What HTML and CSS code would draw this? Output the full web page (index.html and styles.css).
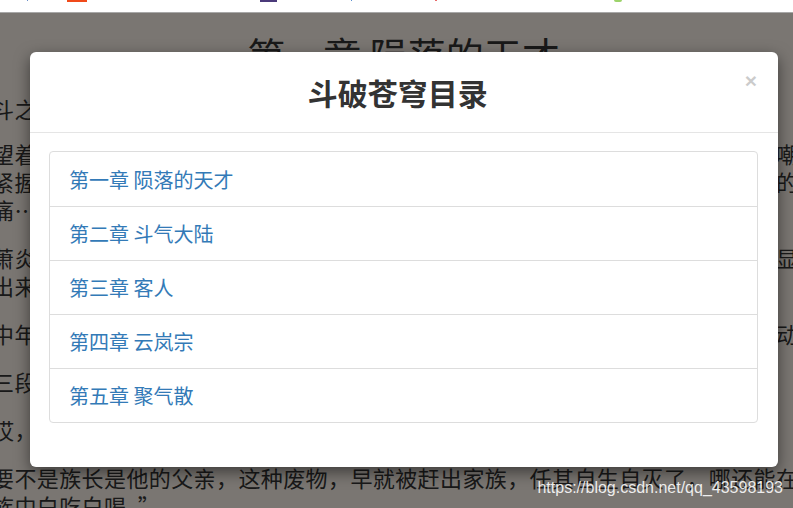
FILE: index.html
```html
<!DOCTYPE html>
<html lang="zh-CN">
<head>
    <meta charset="UTF-8">
    <meta name="viewport" content="width=device-width, initial-scale=1.0">
    <title>斗破苍穹</title>
    <link rel="stylesheet" href="styles.css">
</head>
<body>
    <div class="topbar">
        <span class="tb tb-blue"></span>
        <span class="tb tb-orange"></span>
        <span class="tb tb-purple"></span>
        <span class="tb tb-blue2"></span>
        <span class="tb tb-red"></span>
        <span class="tb tb-green"></span>
    </div>

    <div class="viewport">
        <article class="chapter">
            <h1>第一章 陨落的天才</h1>
            <p>斗之力，三段！</p>
            <p>望着测验魔石碑上闪亮得有些刺眼的五个大字，少年面无表情，唇角有着一抹自嘲，紧握的手掌，因为大力，导致略微尖锐的指甲深深刺进了掌心，带来一阵阵钻心的疼痛……</p>
            <p>萧炎，斗之力，三段！测验魔石碑之旁，一位中年男子，淡淡地看了一眼碑上所显示出来的信息，语气漠然的将之公布了出来……</p>
            <p>中年男子话刚刚脱口，便是不出意外的在人头汹涌的广场上带起了一阵嘲讽的骚动。</p>
            <p>三段？嘿嘿，果然不出我所料，这个“天才”这一年又是在原地踏步！</p>
            <p>哎，这废物真是把家族的脸都给丢光了。</p>
            <p>要不是族长是他的父亲，这种废物，早就被赶出家族，任其自生自灭了，哪还能在家族中白吃白喝。”</p>
        </article>

        <div class="backdrop">
            <div class="modal">
                <div class="modal-header">
                    <h4 class="modal-title">斗破苍穹目录</h4>
                    <button class="close" type="button">&times;</button>
                </div>
                <div class="modal-body">
                    <div class="list-group">
                        <a class="list-group-item" href="#">第一章 陨落的天才</a>
                        <a class="list-group-item" href="#">第二章 斗气大陆</a>
                        <a class="list-group-item" href="#">第三章 客人</a>
                        <a class="list-group-item" href="#">第四章 云岚宗</a>
                        <a class="list-group-item" href="#">第五章 聚气散</a>
                    </div>
                </div>
            </div>
            <span class="watermark">https://blog.csdn.net/qq_43598193</span>
        </div>
    </div>
</body>
</html>
```

FILE: styles.css
```css
body {
    margin: 0;
    padding: 0;
    overflow: hidden;
    font-family: "Noto Sans CJK SC", "Noto Sans", sans-serif;
    background: #f4ece4;
    color: #333;
}
.topbar {
    height: 12px;
    background: #fff;
    border-bottom: 1px solid #a8a8a8;
    display: flex;
    align-items: flex-start;
}
.tb {
    display: block;
    height: 1px;
}
.tb-blue { width: 1px; margin-left: 27px; background: #6b8fc9; }
.tb-orange { width: 20px; margin-left: 39px; height: 2px; background: #f04a1a; }
.tb-purple { width: 17px; margin-left: 173px; height: 2px; background: #4b3a7a; }
.tb-blue2 { width: 1px; margin-left: 74px; background: #5a8fd0; }
.tb-red { width: 2px; margin-left: 83px; background: #e86a6a; }
.tb-green { width: 8px; margin-left: 177px; height: 2px; border-radius: 0 0 4px 4px; background: #9cd36a; }

.viewport {
    position: relative;
    height: 495px;
    overflow: hidden;
}
.chapter {
    width: 832px;
    margin-left: -8px;
    padding-top: 20px;
}
.chapter h1 {
    margin: 0 0 19px;
    font-size: 38px;
    font-weight: normal;
    line-height: 42px;
    text-align: center;
    padding-right: 9px;
}
.chapter p {
    margin: 0 0 20px;
    font-size: 22px;
    letter-spacing: 0.4px;
    line-height: 28px;
}
.chapter p:first-of-type {
    margin-bottom: 17px;
}

.backdrop {
    position: absolute;
    top: 0;
    left: 0;
    right: 0;
    bottom: 0;
    background: rgba(0, 0, 0, 0.5);
}
.modal {
    width: 748px;
    margin: 39px 0 0 30px;
    background: #fff;
    border-radius: 6px;
    box-shadow: 0 5px 15px rgba(0, 0, 0, 0.5);
}
.modal-header {
    display: flex;
    align-items: flex-start;
    padding: 24px 21px 23px;
    border-bottom: 1px solid #e5e5e5;
}
.modal-title {
    flex: 1;
    margin: 0;
    font-size: 30px;
    font-weight: bold;
    line-height: 33px;
    text-align: center;
    color: #333;
}
.close {
    margin-top: -6px;
    padding: 0;
    border: 0;
    background: none;
    font-family: "Liberation Sans", Arial, sans-serif;
    font-size: 21px;
    font-weight: bold;
    line-height: 21px;
    color: #000;
    opacity: 0.2;
    cursor: pointer;
}
.modal-body {
    padding: 18px 20px 44px 19px;
}
.list-group {
    display: flex;
    flex-direction: column;
}
.list-group-item {
    display: block;
    padding: 12px 19px;
    margin-bottom: -1px;
    border: 1px solid #ddd;
    font-size: 20px;
    line-height: 29px;
    color: #337ab7;
    text-decoration: none;
}
.list-group-item:first-child {
    padding-top: 13px;
    border-radius: 4px 4px 0 0;
}
.list-group-item:last-child {
    margin-bottom: 0;
    border-radius: 0 0 4px 4px;
}
.watermark {
    position: absolute;
    right: 10px;
    bottom: 11px;
    font-family: "Liberation Sans", Arial, sans-serif;
    font-size: 16px;
    line-height: 18px;
    color: rgba(255, 255, 255, 0.88);
}
```
